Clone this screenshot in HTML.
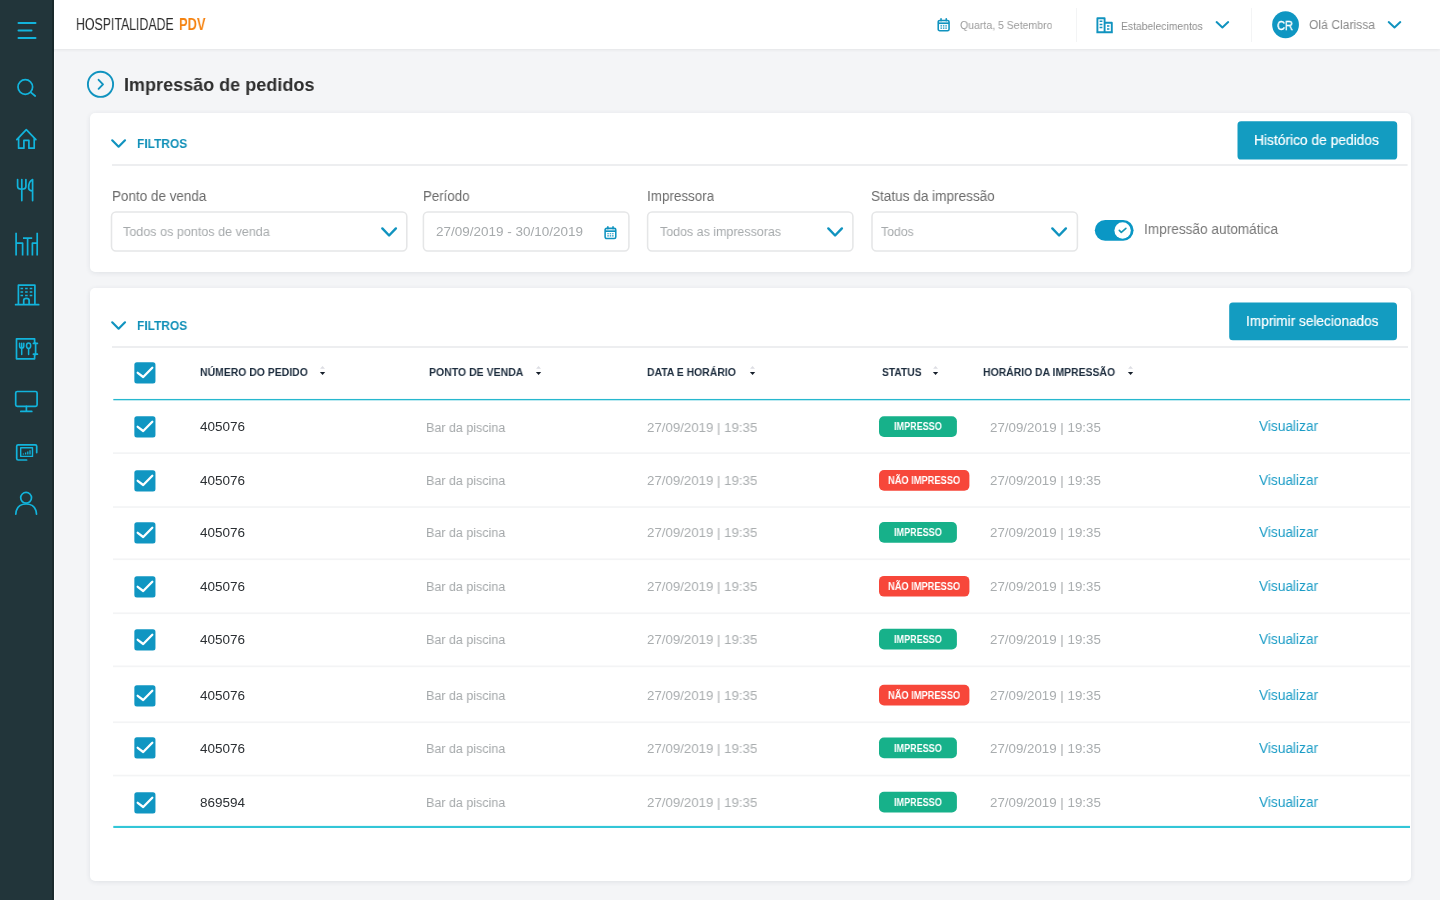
<!DOCTYPE html>
<html lang="pt-BR"><head><meta charset="utf-8"><title>Impressão de pedidos</title>
<style>
html,body{margin:0;padding:0}
body{width:1440px;height:900px;overflow:hidden;background:#f4f5f7;position:relative;font-family:"Liberation Sans",sans-serif}
#side{position:absolute;left:0;top:0;width:54px;height:900px;background:#22353a;box-shadow:inset -2px 0 0 #1a2a2d}
#top{position:absolute;left:54px;top:0;width:1386px;height:49px;background:#fff;box-shadow:0 1px 3px rgba(0,0,0,.07)}
#edge{position:absolute;left:54px;top:52px;width:1px;height:848px;background:#fafbfc}
.vd{position:absolute;top:8px;width:1px;height:34px;background:#f3f4f5}
#sideic{position:absolute;left:0;top:0}
.t{position:absolute;white-space:nowrap;display:block;transform-origin:0 0;will-change:transform}
.ic{position:absolute;display:block;overflow:visible}

.card{position:absolute;background:#fff;border-radius:5px;box-shadow:0 1px 5px rgba(40,60,80,.10)}
.hl{position:absolute;height:1.4px;background:#e9edf0}
.sp{position:absolute;height:1.3px;background:#f3f4f6}
.tl{position:absolute;height:1.6px;background:#2bb6d3}
.btn{position:absolute;background:#149cc1;border-radius:3.5px}
.box{position:absolute;box-shadow:inset 0 0 0 1.6px #e2e4e6;border-radius:5.5px;background:#fff}
.bd{position:absolute;height:20.6px;border-radius:5px}
</style></head>
<body>
<div id="edge"></div><div id="side"></div>
<div id="top"></div>
<div class="vd" style="left:1076px"></div>
<div class="vd" style="left:1251px"></div>

<svg id="sideic" width="54" height="900" viewBox="0 0 54 900" fill="none" stroke="#12b4dc" stroke-width="1.7" stroke-linecap="round" stroke-linejoin="round">
<!-- hamburger -->
<path d="M18.5 23.1H35.5M18.5 30.5H31.5M18.5 38H35.5" stroke-width="2"/>
<!-- search -->
<circle cx="25.3" cy="87" r="7.3"/><path d="M30.8 92.3L35.2 96"/>
<!-- home -->
<path d="M16.8 139.6L26.3 129.6L35.9 139.6M18.6 138.2V148.2H23.9V140.4H28.9V148.2H34.2V138.2"/>
<!-- fork knife -->
<path d="M17.6 179.6V186.2Q17.6 189.2 21.8 189.2Q25.9 189.2 25.9 186.2V179.6M21.8 179.6V200.6M32.6 200.6V179.6Q28.4 181.6 28.6 188.2Q28.9 190.8 32.6 191.2"/>
<!-- tables -->
<path d="M16.1 232.8V255.4M16.1 243.2H22.6V255.4M23 238.2H32.2M27.6 238.2V255.4M37.2 232.8V255.4M37.2 243.2H32.4V255.4" stroke-linecap="butt"/>
<!-- building -->
<path d="M18.4 304.6V285.2H34.9V304.6M15.6 304.7H38.7M23.7 304.6V300.4Q23.7 298.4 26.4 298.4Q29.1 298.4 29.1 300.4V304.6"/>
<path d="M20.5 288.4H23.1M25.1 288.4H27.7M29.7 288.4H32.3M20.5 292H23.1M25.1 292H27.7M29.7 292H32.3M20.5 295.6H23.1M25.1 295.6H27.7M29.7 295.6H32.3" stroke-width="1.5" stroke-linecap="butt"/>
<!-- menu board -->
<path d="M34.6 343V338.8H16.5V358.8H34.6V354.6M35.6 343V354.6M33.4 343.4H37.4M33.4 354.2H37.4" />
<path d="M19.6 343.2V346.2Q19.6 348 21.7 348Q23.8 348 23.8 346.2V343.2M21.7 343.2V354.4M28.6 348.6V354.4" stroke-width="1.5"/>
<ellipse cx="28.6" cy="345.8" rx="2.1" ry="2.7" stroke-width="1.5"/>
<!-- monitor -->
<rect x="15.7" y="391.5" width="21.4" height="14.8" rx="1.6"/><path d="M26.4 406.4V411.2M20.8 411.4H31.8"/>
<!-- chart screens -->
<path d="M26.6 460H18.2Q16.7 460 16.7 458.5V446.3Q16.7 444.8 18.2 444.8H35.2Q36.7 444.8 36.7 446.3V452.6" />
<rect x="20.7" y="447.8" width="11.8" height="8.6" stroke-width="1.4"/>
<path d="M23.4 454.6V453.4M25.6 454.6V452.4M27.8 454.6V451.4M30 454.6V450.2" stroke-width="1.3" stroke-linecap="butt"/>
<!-- user -->
<circle cx="26.1" cy="497.8" r="5.4"/><path d="M15.8 514.2Q16.4 504 26.1 504Q35.9 504 36.5 514.2"/>
</svg>
<span class="t" style="left:76.00px;top:15.80px;font-size:15.89px;line-height:17px;color:#2b2b2b;transform:scaleX(0.7763);">HOSPITALIDADE</span>
<span class="t" style="left:178.60px;top:15.80px;font-size:15.89px;line-height:17px;color:#f5820f;font-weight:700;transform:scaleX(0.8142);">PDV</span>
<svg class="ic" style="left:937.3px;top:17.5px" width="13.3" height="14" viewBox="0 0 14 15" fill="none" stroke="#1093bf" stroke-width="1.7">
<rect x="1.2" y="2.6" width="11.6" height="11" rx="1.6"/><path d="M1.2 5.6H12.8" stroke-width="1.8"/><path d="M4.2 0.8V3M9.8 0.8V3" stroke-linecap="round"/>
<path d="M3.6 8.4H10.4M3.6 10.8H10.4" stroke-width="1.3" stroke-dasharray="1.6 1"/></svg>
<span class="t" style="left:960.20px;top:18.90px;font-size:11.27px;line-height:12px;color:#9b9b9b;transform:scaleX(0.9336);">Quarta, 5 Setembro</span>
<svg class="ic" style="left:1096px;top:17px" width="18" height="16" viewBox="0 0 18 16" fill="none" stroke="#1093bf" stroke-width="1.9">
<path d="M1.4 15V1.2H8.6V15M8.6 5.8H15.8V15M0.4 15.2H16.8" stroke-linejoin="round"/>
<path d="M3.6 4.2H6.4M3.6 7.4H6.4M3.6 10.6H6.4M11 9H13.4M11 12H13.4" stroke-width="1.5"/></svg>
<span class="t" style="left:1120.90px;top:19.80px;font-size:11.27px;line-height:12px;color:#8f8f8f;transform:scaleX(0.9196);">Estabelecimentos</span>
<svg class="ic" style="left:1214px;top:19px" width="17" height="12" viewBox="0 0 17 12" fill="none" stroke="#1093bf" stroke-width="2" stroke-linecap="round" stroke-linejoin="round"><path d="M2.6 3.1L8.4 8.4L14.2 3.1"/></svg>
<svg class="ic" style="left:1270px;top:9px" width="32" height="32" viewBox="0 0 32 32"><circle cx="15.55" cy="15.75" r="13.4" fill="#0f96c2"/></svg>
<span class="t" style="left:1276.60px;top:17.80px;font-size:13.32px;line-height:15px;color:#ffffff;transform:scaleX(0.8423);-webkit-text-stroke:0.35px #fff;">CR</span>
<span class="t" style="left:1309.40px;top:16.90px;font-size:13.32px;line-height:15px;color:#8a8a8a;transform:scaleX(0.9110);">Olá Clarissa</span>
<svg class="ic" style="left:1386px;top:19px" width="17" height="12" viewBox="0 0 17 12" fill="none" stroke="#1093bf" stroke-width="2" stroke-linecap="round" stroke-linejoin="round"><path d="M2.7 3.1L8.5 8.4L14.3 3.1"/></svg>
<svg class="ic" style="left:86.1px;top:69.85px" width="29" height="29" viewBox="0 0 29 29" fill="none" stroke="#1093bf" stroke-width="1.9" stroke-linecap="round" stroke-linejoin="round"><circle cx="14.5" cy="14.3" r="12.6"/><path d="M12.6 9.8L17 14.3L12.6 18.8"/></svg>
<span class="t" style="left:123.90px;top:73.60px;font-size:18.45px;line-height:21px;color:#2e2e2e;font-weight:700;transform:scaleX(0.9779);">Impressão de pedidos</span>
<div class="card" style="left:90px;top:113px;width:1321px;height:159px"></div>
<svg class="ic" style="left:110.8px;top:139.1px" width="16" height="10" viewBox="0 0 16 10" fill="none" stroke="#1093bf" stroke-width="2.2" stroke-linecap="round" stroke-linejoin="round"><path d="M1.2 1.3L7.6 7.7L14 1.3"/></svg>
<span class="t" style="left:137.20px;top:135.90px;font-size:13.32px;line-height:15px;color:#1190b8;font-weight:700;transform:scaleX(0.8985);">FILTROS</span>
<svg class="ic" style="left:0;top:0" width="1440" height="900" viewBox="0 0 1440 900"><rect x="1237.5" y="121.35" width="159.7" height="38.15" rx="3.6" fill="#139cc1"/></svg>
<span class="t" style="left:1254.20px;top:132.00px;font-size:14.35px;line-height:16px;color:#ffffff;transform:scaleX(0.9614);-webkit-text-stroke:0.2px #fff;">Histórico de pedidos</span>
<span class="t" style="left:111.50px;top:188.00px;font-size:14.35px;line-height:16px;color:#6c6c6c;transform:scaleX(0.9388);">Ponto de venda</span>
<span class="t" style="left:423.00px;top:188.00px;font-size:14.35px;line-height:16px;color:#6c6c6c;transform:scaleX(0.9273);">Período</span>
<span class="t" style="left:647.40px;top:188.00px;font-size:14.35px;line-height:16px;color:#6c6c6c;transform:scaleX(0.9362);">Impressora</span>
<span class="t" style="left:871.20px;top:188.00px;font-size:14.35px;line-height:16px;color:#6c6c6c;transform:scaleX(0.9464);">Status da impressão</span>
<svg class="ic" style="left:0;top:0" width="1440" height="900" viewBox="0 0 1440 900"><rect x="111.50" y="212.05" width="295.30" height="38.85" rx="4.4" fill="#fff" stroke="#e5e6e7" stroke-width="1.55"/><rect x="423.40" y="212.05" width="205.50" height="38.85" rx="4.4" fill="#fff" stroke="#e5e6e7" stroke-width="1.55"/><rect x="647.60" y="212.05" width="205.30" height="38.85" rx="4.4" fill="#fff" stroke="#e5e6e7" stroke-width="1.55"/><rect x="872.00" y="212.05" width="205.40" height="38.85" rx="4.4" fill="#fff" stroke="#e5e6e7" stroke-width="1.55"/></svg>
<span class="t" style="left:122.80px;top:224.00px;font-size:13.32px;line-height:15px;color:#a6aaac;transform:scaleX(0.9445);">Todos os pontos de venda</span>
<span class="t" style="left:435.80px;top:224.10px;font-size:13.32px;line-height:15px;color:#a6aaac;transform:scaleX(1.0134);">27/09/2019 - 30/10/2019</span>
<span class="t" style="left:660.20px;top:224.00px;font-size:13.32px;line-height:15px;color:#a6aaac;transform:scaleX(0.9348);">Todos as impressoras</span>
<span class="t" style="left:880.50px;top:224.00px;font-size:13.32px;line-height:15px;color:#a6aaac;transform:scaleX(0.9230);">Todos</span>
<svg class="ic" style="left:380.6px;top:226.8px" width="17" height="11" viewBox="0 0 17 11" fill="none" stroke="#1093bf" stroke-width="2.4" stroke-linecap="round" stroke-linejoin="round"><path d="M1.3 1.4L8.1 8.5L14.9 1.4"/></svg>
<svg class="ic" style="left:826.9px;top:226.8px" width="17" height="11" viewBox="0 0 17 11" fill="none" stroke="#1093bf" stroke-width="2.4" stroke-linecap="round" stroke-linejoin="round"><path d="M1.3 1.4L8.1 8.5L14.9 1.4"/></svg>
<svg class="ic" style="left:1050.7px;top:226.8px" width="17" height="11" viewBox="0 0 17 11" fill="none" stroke="#1093bf" stroke-width="2.4" stroke-linecap="round" stroke-linejoin="round"><path d="M1.3 1.4L8.1 8.5L14.9 1.4"/></svg>
<svg class="ic" style="left:604.4px;top:225.7px" width="12.9" height="13.8" viewBox="0 0 14 15" fill="none" stroke="#1093bf" stroke-width="1.7">
<rect x="1.2" y="2.6" width="11.6" height="11" rx="1.6"/><path d="M1.2 5.6H12.8" stroke-width="1.8"/><path d="M4.2 0.8V3M9.8 0.8V3" stroke-linecap="round"/>
<path d="M3.6 8.4H10.4M3.6 10.8H10.4" stroke-width="1.3" stroke-dasharray="1.6 1"/></svg>
<svg class="ic" style="left:1094px;top:219px" width="42" height="23" viewBox="0 0 42 23"><rect x="0.8" y="0.9" width="38.8" height="20.85" rx="10.42" fill="#0a97c5"/><circle cx="28.6" cy="11.5" r="8.2" fill="#fff"/><path d="M25.3 11.4L27.3 13.4L31.9 9.3" fill="none" stroke="#1496b4" stroke-width="1.6" stroke-linecap="round" stroke-linejoin="round"/></svg>
<span class="t" style="left:1144.30px;top:221.30px;font-size:14.35px;line-height:16px;color:#777777;transform:scaleX(0.9491);">Impressão automática</span>
<div class="card" style="left:90px;top:288px;width:1321px;height:593px"></div>
<svg class="ic" style="left:110.8px;top:321.2px" width="16" height="10" viewBox="0 0 16 10" fill="none" stroke="#1093bf" stroke-width="2.2" stroke-linecap="round" stroke-linejoin="round"><path d="M1.2 1.3L7.6 7.7L14 1.3"/></svg>
<svg class="ic" style="left:0;top:0" width="1440" height="900" viewBox="0 0 1440 900"><rect x="1229.2" y="302.5" width="167.8" height="37.85" rx="3.6" fill="#139cc1"/></svg>
<span class="t" style="left:137.20px;top:318.00px;font-size:13.32px;line-height:15px;color:#1190b8;font-weight:700;transform:scaleX(0.8985);">FILTROS</span>
<span class="t" style="left:1246.20px;top:312.80px;font-size:14.35px;line-height:16px;color:#ffffff;transform:scaleX(0.9501);-webkit-text-stroke:0.2px #fff;">Imprimir selecionados</span>
<svg class="ic" style="left:134px;top:361.5px" width="22" height="22" viewBox="0 0 22 22"><rect x="0.35" y="0.35" width="21.1" height="21.2" rx="2.5" fill="#1096c2"/><path d="M3.7 10.8L9.2 15L18.3 5.7" fill="none" stroke="#fff" stroke-width="2.3" stroke-linecap="round" stroke-linejoin="round"/></svg>
<span class="t" style="left:199.80px;top:365.80px;font-size:11.27px;line-height:12px;color:#1d2d3e;font-weight:700;transform:scaleX(0.9256);">NÚMERO DO PEDIDO</span>
<svg class="ic" style="left:319.0px;top:365px" width="7" height="11" viewBox="0 0 7 11"><path d="M1.1 3.7L3.55 1.1L6 3.7Z" fill="#dcdde3"/><path d="M0.9 6.9H6.2L3.55 10Z" fill="#161f2b"/></svg>
<span class="t" style="left:429.20px;top:365.80px;font-size:11.27px;line-height:12px;color:#1d2d3e;font-weight:700;transform:scaleX(0.9325);">PONTO DE VENDA</span>
<svg class="ic" style="left:535.0px;top:365px" width="7" height="11" viewBox="0 0 7 11"><path d="M1.1 3.7L3.55 1.1L6 3.7Z" fill="#dcdde3"/><path d="M0.9 6.9H6.2L3.55 10Z" fill="#161f2b"/></svg>
<span class="t" style="left:647.30px;top:365.80px;font-size:11.27px;line-height:12px;color:#1d2d3e;font-weight:700;transform:scaleX(0.9230);">DATA E HORÁRIO</span>
<svg class="ic" style="left:748.5px;top:365px" width="7" height="11" viewBox="0 0 7 11"><path d="M1.1 3.7L3.55 1.1L6 3.7Z" fill="#dcdde3"/><path d="M0.9 6.9H6.2L3.55 10Z" fill="#161f2b"/></svg>
<span class="t" style="left:881.90px;top:365.80px;font-size:11.27px;line-height:12px;color:#1d2d3e;font-weight:700;transform:scaleX(0.9099);">STATUS</span>
<svg class="ic" style="left:932.3px;top:365px" width="7" height="11" viewBox="0 0 7 11"><path d="M1.1 3.7L3.55 1.1L6 3.7Z" fill="#dcdde3"/><path d="M0.9 6.9H6.2L3.55 10Z" fill="#161f2b"/></svg>
<span class="t" style="left:983.40px;top:365.80px;font-size:11.27px;line-height:12px;color:#1d2d3e;font-weight:700;transform:scaleX(0.9240);">HORÁRIO DA IMPRESSÃO</span>
<svg class="ic" style="left:1127.1px;top:365px" width="7" height="11" viewBox="0 0 7 11"><path d="M1.1 3.7L3.55 1.1L6 3.7Z" fill="#dcdde3"/><path d="M0.9 6.9H6.2L3.55 10Z" fill="#161f2b"/></svg>
<svg class="ic" style="left:0;top:0" width="1440" height="900" viewBox="0 0 1440 900"><rect x="879" y="416.3" width="77.9" height="20.7" rx="5" fill="#17b18a"/><rect x="879" y="470.1" width="90.4" height="20.7" rx="5" fill="#f7473a"/><rect x="879" y="522.1" width="77.9" height="20.7" rx="5" fill="#17b18a"/><rect x="879" y="575.9" width="90.4" height="20.7" rx="5" fill="#f7473a"/><rect x="879" y="628.8" width="77.9" height="20.7" rx="5" fill="#17b18a"/><rect x="879" y="684.8" width="90.4" height="20.7" rx="5" fill="#f7473a"/><rect x="879" y="737.6" width="77.9" height="20.7" rx="5" fill="#17b18a"/><rect x="879" y="791.8" width="77.9" height="20.7" rx="5" fill="#17b18a"/></svg>
<svg class="ic" style="left:134px;top:416.0px" width="22" height="22" viewBox="0 0 22 22"><rect x="0.35" y="0.35" width="21.1" height="21.2" rx="2.5" fill="#1096c2"/><path d="M3.7 10.8L9.2 15L18.3 5.7" fill="none" stroke="#fff" stroke-width="2.3" stroke-linecap="round" stroke-linejoin="round"/></svg>
<span class="t" style="left:199.80px;top:419.20px;font-size:13.32px;line-height:15px;color:#2b2f33;transform:scaleX(1.0146);">405076</span>
<span class="t" style="left:425.80px;top:419.60px;font-size:13.32px;line-height:15px;color:#a4a8aa;transform:scaleX(0.9393);">Bar da piscina</span>
<span class="t" style="left:647.30px;top:419.60px;font-size:13.32px;line-height:15px;color:#a9adaf;transform:scaleX(0.9949);">27/09/2019 | 19:35</span>
<span class="t" style="left:893.50px;top:421.20px;font-size:10.25px;line-height:11px;color:#ffffff;font-weight:700;transform:scaleX(0.8815);">IMPRESSO</span>
<span class="t" style="left:989.90px;top:419.60px;font-size:13.32px;line-height:15px;color:#a9adaf;transform:scaleX(0.9985);">27/09/2019 | 19:35</span>
<span class="t" style="left:1258.80px;top:418.30px;font-size:14.35px;line-height:16px;color:#1a9cc6;transform:scaleX(0.9540);">Visualizar</span>
<svg class="ic" style="left:134px;top:469.8px" width="22" height="22" viewBox="0 0 22 22"><rect x="0.35" y="0.35" width="21.1" height="21.2" rx="2.5" fill="#1096c2"/><path d="M3.7 10.8L9.2 15L18.3 5.7" fill="none" stroke="#fff" stroke-width="2.3" stroke-linecap="round" stroke-linejoin="round"/></svg>
<span class="t" style="left:199.80px;top:473.00px;font-size:13.32px;line-height:15px;color:#2b2f33;transform:scaleX(1.0146);">405076</span>
<span class="t" style="left:425.80px;top:473.40px;font-size:13.32px;line-height:15px;color:#a4a8aa;transform:scaleX(0.9393);">Bar da piscina</span>
<span class="t" style="left:647.30px;top:473.40px;font-size:13.32px;line-height:15px;color:#a9adaf;transform:scaleX(0.9949);">27/09/2019 | 19:35</span>
<span class="t" style="left:888.20px;top:475.00px;font-size:10.25px;line-height:11px;color:#ffffff;font-weight:700;transform:scaleX(0.9055);">NÃO IMPRESSO</span>
<span class="t" style="left:989.90px;top:473.40px;font-size:13.32px;line-height:15px;color:#a9adaf;transform:scaleX(0.9985);">27/09/2019 | 19:35</span>
<span class="t" style="left:1258.80px;top:472.10px;font-size:14.35px;line-height:16px;color:#1a9cc6;transform:scaleX(0.9540);">Visualizar</span>
<svg class="ic" style="left:134px;top:521.8px" width="22" height="22" viewBox="0 0 22 22"><rect x="0.35" y="0.35" width="21.1" height="21.2" rx="2.5" fill="#1096c2"/><path d="M3.7 10.8L9.2 15L18.3 5.7" fill="none" stroke="#fff" stroke-width="2.3" stroke-linecap="round" stroke-linejoin="round"/></svg>
<span class="t" style="left:199.80px;top:525.00px;font-size:13.32px;line-height:15px;color:#2b2f33;transform:scaleX(1.0146);">405076</span>
<span class="t" style="left:425.80px;top:525.40px;font-size:13.32px;line-height:15px;color:#a4a8aa;transform:scaleX(0.9393);">Bar da piscina</span>
<span class="t" style="left:647.30px;top:525.40px;font-size:13.32px;line-height:15px;color:#a9adaf;transform:scaleX(0.9949);">27/09/2019 | 19:35</span>
<span class="t" style="left:893.50px;top:527.00px;font-size:10.25px;line-height:11px;color:#ffffff;font-weight:700;transform:scaleX(0.8815);">IMPRESSO</span>
<span class="t" style="left:989.90px;top:525.40px;font-size:13.32px;line-height:15px;color:#a9adaf;transform:scaleX(0.9985);">27/09/2019 | 19:35</span>
<span class="t" style="left:1258.80px;top:524.10px;font-size:14.35px;line-height:16px;color:#1a9cc6;transform:scaleX(0.9540);">Visualizar</span>
<svg class="ic" style="left:134px;top:575.6px" width="22" height="22" viewBox="0 0 22 22"><rect x="0.35" y="0.35" width="21.1" height="21.2" rx="2.5" fill="#1096c2"/><path d="M3.7 10.8L9.2 15L18.3 5.7" fill="none" stroke="#fff" stroke-width="2.3" stroke-linecap="round" stroke-linejoin="round"/></svg>
<span class="t" style="left:199.80px;top:578.80px;font-size:13.32px;line-height:15px;color:#2b2f33;transform:scaleX(1.0146);">405076</span>
<span class="t" style="left:425.80px;top:579.20px;font-size:13.32px;line-height:15px;color:#a4a8aa;transform:scaleX(0.9393);">Bar da piscina</span>
<span class="t" style="left:647.30px;top:579.20px;font-size:13.32px;line-height:15px;color:#a9adaf;transform:scaleX(0.9949);">27/09/2019 | 19:35</span>
<span class="t" style="left:888.20px;top:580.80px;font-size:10.25px;line-height:11px;color:#ffffff;font-weight:700;transform:scaleX(0.9055);">NÃO IMPRESSO</span>
<span class="t" style="left:989.90px;top:579.20px;font-size:13.32px;line-height:15px;color:#a9adaf;transform:scaleX(0.9985);">27/09/2019 | 19:35</span>
<span class="t" style="left:1258.80px;top:577.90px;font-size:14.35px;line-height:16px;color:#1a9cc6;transform:scaleX(0.9540);">Visualizar</span>
<svg class="ic" style="left:134px;top:628.5px" width="22" height="22" viewBox="0 0 22 22"><rect x="0.35" y="0.35" width="21.1" height="21.2" rx="2.5" fill="#1096c2"/><path d="M3.7 10.8L9.2 15L18.3 5.7" fill="none" stroke="#fff" stroke-width="2.3" stroke-linecap="round" stroke-linejoin="round"/></svg>
<span class="t" style="left:199.80px;top:631.70px;font-size:13.32px;line-height:15px;color:#2b2f33;transform:scaleX(1.0146);">405076</span>
<span class="t" style="left:425.80px;top:632.10px;font-size:13.32px;line-height:15px;color:#a4a8aa;transform:scaleX(0.9393);">Bar da piscina</span>
<span class="t" style="left:647.30px;top:632.10px;font-size:13.32px;line-height:15px;color:#a9adaf;transform:scaleX(0.9949);">27/09/2019 | 19:35</span>
<span class="t" style="left:893.50px;top:633.70px;font-size:10.25px;line-height:11px;color:#ffffff;font-weight:700;transform:scaleX(0.8815);">IMPRESSO</span>
<span class="t" style="left:989.90px;top:632.10px;font-size:13.32px;line-height:15px;color:#a9adaf;transform:scaleX(0.9985);">27/09/2019 | 19:35</span>
<span class="t" style="left:1258.80px;top:630.80px;font-size:14.35px;line-height:16px;color:#1a9cc6;transform:scaleX(0.9540);">Visualizar</span>
<svg class="ic" style="left:134px;top:684.5px" width="22" height="22" viewBox="0 0 22 22"><rect x="0.35" y="0.35" width="21.1" height="21.2" rx="2.5" fill="#1096c2"/><path d="M3.7 10.8L9.2 15L18.3 5.7" fill="none" stroke="#fff" stroke-width="2.3" stroke-linecap="round" stroke-linejoin="round"/></svg>
<span class="t" style="left:199.80px;top:687.70px;font-size:13.32px;line-height:15px;color:#2b2f33;transform:scaleX(1.0146);">405076</span>
<span class="t" style="left:425.80px;top:688.10px;font-size:13.32px;line-height:15px;color:#a4a8aa;transform:scaleX(0.9393);">Bar da piscina</span>
<span class="t" style="left:647.30px;top:688.10px;font-size:13.32px;line-height:15px;color:#a9adaf;transform:scaleX(0.9949);">27/09/2019 | 19:35</span>
<span class="t" style="left:888.20px;top:689.70px;font-size:10.25px;line-height:11px;color:#ffffff;font-weight:700;transform:scaleX(0.9055);">NÃO IMPRESSO</span>
<span class="t" style="left:989.90px;top:688.10px;font-size:13.32px;line-height:15px;color:#a9adaf;transform:scaleX(0.9985);">27/09/2019 | 19:35</span>
<span class="t" style="left:1258.80px;top:686.80px;font-size:14.35px;line-height:16px;color:#1a9cc6;transform:scaleX(0.9540);">Visualizar</span>
<svg class="ic" style="left:134px;top:737.3px" width="22" height="22" viewBox="0 0 22 22"><rect x="0.35" y="0.35" width="21.1" height="21.2" rx="2.5" fill="#1096c2"/><path d="M3.7 10.8L9.2 15L18.3 5.7" fill="none" stroke="#fff" stroke-width="2.3" stroke-linecap="round" stroke-linejoin="round"/></svg>
<span class="t" style="left:199.80px;top:740.50px;font-size:13.32px;line-height:15px;color:#2b2f33;transform:scaleX(1.0146);">405076</span>
<span class="t" style="left:425.80px;top:740.90px;font-size:13.32px;line-height:15px;color:#a4a8aa;transform:scaleX(0.9393);">Bar da piscina</span>
<span class="t" style="left:647.30px;top:740.90px;font-size:13.32px;line-height:15px;color:#a9adaf;transform:scaleX(0.9949);">27/09/2019 | 19:35</span>
<span class="t" style="left:893.50px;top:742.50px;font-size:10.25px;line-height:11px;color:#ffffff;font-weight:700;transform:scaleX(0.8815);">IMPRESSO</span>
<span class="t" style="left:989.90px;top:740.90px;font-size:13.32px;line-height:15px;color:#a9adaf;transform:scaleX(0.9985);">27/09/2019 | 19:35</span>
<span class="t" style="left:1258.80px;top:739.60px;font-size:14.35px;line-height:16px;color:#1a9cc6;transform:scaleX(0.9540);">Visualizar</span>
<svg class="ic" style="left:134px;top:791.5px" width="22" height="22" viewBox="0 0 22 22"><rect x="0.35" y="0.35" width="21.1" height="21.2" rx="2.5" fill="#1096c2"/><path d="M3.7 10.8L9.2 15L18.3 5.7" fill="none" stroke="#fff" stroke-width="2.3" stroke-linecap="round" stroke-linejoin="round"/></svg>
<span class="t" style="left:199.80px;top:794.70px;font-size:13.32px;line-height:15px;color:#2b2f33;transform:scaleX(1.0146);">869594</span>
<span class="t" style="left:425.80px;top:795.10px;font-size:13.32px;line-height:15px;color:#a4a8aa;transform:scaleX(0.9393);">Bar da piscina</span>
<span class="t" style="left:647.30px;top:795.10px;font-size:13.32px;line-height:15px;color:#a9adaf;transform:scaleX(0.9949);">27/09/2019 | 19:35</span>
<span class="t" style="left:893.50px;top:796.70px;font-size:10.25px;line-height:11px;color:#ffffff;font-weight:700;transform:scaleX(0.8815);">IMPRESSO</span>
<span class="t" style="left:989.90px;top:795.10px;font-size:13.32px;line-height:15px;color:#a9adaf;transform:scaleX(0.9985);">27/09/2019 | 19:35</span>
<span class="t" style="left:1258.80px;top:793.80px;font-size:14.35px;line-height:16px;color:#1a9cc6;transform:scaleX(0.9540);">Visualizar</span>
<svg class="ic" style="left:0;top:0" width="1440" height="900" viewBox="0 0 1440 900"><rect x="112" y="164.1" width="1295.6" height="1.8" fill="#ecedef"/><rect x="112" y="346.1" width="1296" height="1.8" fill="#ecedef"/><rect x="113.3" y="398.95" width="1296.7" height="1.35" fill="#27b8cf"/><rect x="113" y="452.3" width="1297" height="1.7" fill="#f3f4f5"/><rect x="113" y="506.2" width="1297" height="1.7" fill="#f3f4f5"/><rect x="113" y="558.4" width="1297" height="1.7" fill="#f3f4f5"/><rect x="113" y="612.4" width="1297" height="1.7" fill="#f3f4f5"/><rect x="113" y="665.5" width="1297" height="1.7" fill="#f3f4f5"/><rect x="113" y="721.4" width="1297" height="1.7" fill="#f3f4f5"/><rect x="113" y="774.7" width="1297" height="1.7" fill="#f3f4f5"/><rect x="113.3" y="825.9" width="1296.7" height="2.1" fill="#33c6d7"/></svg>
</body></html>
